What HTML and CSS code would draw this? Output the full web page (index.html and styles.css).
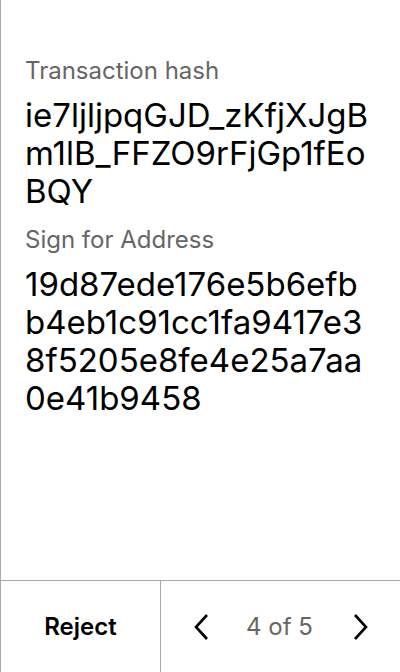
FILE: index.html
```html
<!DOCTYPE html>
<html>
<head>
<meta charset="utf-8">
<link rel="stylesheet" href="styles.css">
</head>
<body>
<div class="screen">
  <main class="content">
    <div class="field">
      <div class="label">Transaction hash</div>
      <div class="value">ie7ljljpqGJD_zKfjXJgBm1lB_FFZO9rFjGp1fEoBQY</div>
    </div>
    <div class="field">
      <div class="label">Sign for Address</div>
      <div class="value">19d87ede176e5b6efbb4eb1c91cc1fa9417e38f5205e8fe4e25a7aa0e41b9458</div>
    </div>
  </main>
  <footer class="bar">
    <div class="reject">Reject</div>
    <div class="pager">
      <svg class="chev" width="16" height="28" viewBox="0 0 16 28"><path d="M14 2 L3 14 L14 26" fill="none" stroke="#000" stroke-width="2.6"/></svg>
      <span class="count">4 of 5</span>
      <svg class="chev" width="16" height="28" viewBox="0 0 16 28"><path d="M2 2 L13 14 L2 26" fill="none" stroke="#000" stroke-width="2.6"/></svg>
    </div>
  </footer>
</div>
</body>
</html>
```
FILE: styles.css
```css
* { box-sizing: border-box; }
html, body { margin: 0; padding: 0; background: #fff; }
body { font-family: Inter, "Noto Sans", sans-serif; color: #000; }
.screen {
  width: 400px;
  height: 672px;
  border-left: 1px solid #a8a8a8;
  display: flex;
  flex-direction: column;
}
.content {
  flex: 1;
  padding: 56px 24px 0 24px;
}
.field + .field { margin-top: 15px; }
.label {
  font-size: 24px;
  line-height: 30px;
  color: #666;
}
.value {
  font-size: 33px;
  line-height: 38px;
  word-break: break-all;
  margin-top: 10px;
}
.bar {
  height: 92px;
  border-top: 1px solid #a8a8a8;
  display: grid;
  grid-template-columns: 159px 1fr;
}
.reject {
  display: flex;
  align-items: center;
  justify-content: center;
  font-size: 24px;
  font-weight: 600;
}
.pager {
  border-left: 1px solid #a8a8a8;
  display: flex;
  align-items: center;
  justify-content: space-between;
  padding: 0 31px 0 32px;
}
.count {
  font-size: 24px;
  color: #666;
  margin-right: 3px;
}
.chev { display: block; }
```
